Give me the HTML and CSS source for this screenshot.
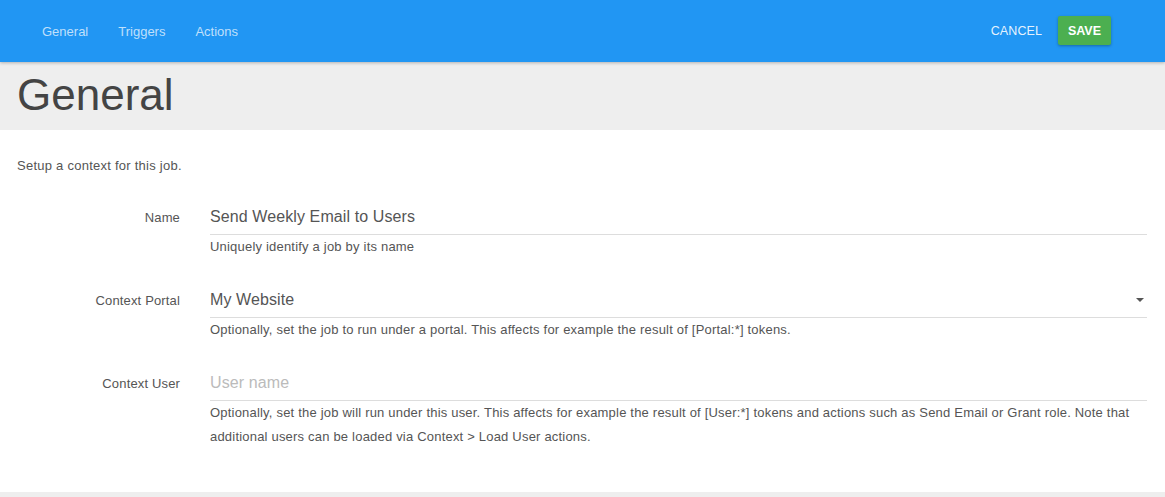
FILE: index.html
```html
<!DOCTYPE html>
<html>
<head>
<meta charset="utf-8">
<link rel="stylesheet" href="styles.css">
</head>
<body>
<header class="topbar">
  <nav class="tabs">
    <a class="tab">General</a>
    <a class="tab">Triggers</a>
    <a class="tab">Actions</a>
  </nav>
  <div class="actions">
    <button class="btn-cancel">CANCEL</button>
    <button class="btn-save">SAVE</button>
  </div>
</header>
<section class="title-band">
  <h1 class="title">General</h1>
</section>
<main class="content">
  <p class="intro">Setup a context for this job.</p>
  <div class="form-row">
    <label class="label">Name</label>
    <div class="field">
      <div class="input">Send Weekly Email to Users</div>
      <div class="help">Uniquely identify a job by its name</div>
    </div>
  </div>
  <div class="form-row">
    <label class="label">Context Portal</label>
    <div class="field">
      <div class="input select">My Website<span class="caret"></span></div>
      <div class="help">Optionally, set the job to run under a portal. This affects for example the result of [Portal:*] tokens.</div>
    </div>
  </div>
  <div class="form-row">
    <label class="label">Context User</label>
    <div class="field">
      <div class="input placeholder">User name</div>
      <div class="help">Optionally, set the job will run under this user. This affects for example the result of [User:*] tokens and actions such as Send Email or Grant role. Note that additional users can be loaded via Context &gt; Load User actions.</div>
    </div>
  </div>
</main>
<footer class="footer-band"></footer>
</body>
</html>
```

FILE: styles.css
```css
* { box-sizing: border-box; }
html, body { margin: 0; padding: 0; }
body {
  font-family: "Liberation Sans", Arial, sans-serif;
  color: #555;
  background: #fff;
  width: 1165px;
  height: 497px;
  overflow: hidden;
  display: flex;
  flex-direction: column;
}
.topbar {
  height: 62px;
  background: #2196f3;
  display: flex;
  align-items: center;
  justify-content: space-between;
  padding: 0 54px 0 27px;
  box-shadow: 0 1px 3px rgba(0,0,0,0.25);
  position: relative;
  z-index: 2;
}
.tabs { display: flex; padding-top: 2px; }
.tab {
  font-size: 13px;
  color: rgba(255,255,255,0.72);
  padding: 0 15px;
  line-height: 20px;
}
.tab + .tab { margin-left: 0; }
.actions { display: flex; align-items: center; gap: 16px; }
.btn-cancel {
  background: none;
  border: none;
  font-family: inherit;
  font-size: 12.5px;
  color: rgba(255,255,255,0.9);
  padding: 0;
  letter-spacing: 0.1px;
}
.btn-save {
  background: #4caf50;
  border: none;
  border-radius: 2px;
  font-family: inherit;
  font-size: 12.5px;
  font-weight: bold;
  color: #fff;
  width: 53px;
  height: 29px;
  padding: 0;
  box-shadow: 0 1px 3px rgba(0,0,0,0.3);
  margin-bottom: 1px;
}
.title-band {
  height: 68px;
  background: #eeeeee;
  padding-left: 17px;
}
.title {
  margin: 0;
  font-size: 44px;
  font-weight: normal;
  color: #444;
  line-height: 66px;
}
.content {
  flex: 1;
  padding: 24px 18px 0 17px;
}
.intro {
  margin: 0 0 23px 0;
  font-size: 13px;
  letter-spacing: 0.25px;
  line-height: 24px;
}
.form-row {
  display: grid;
  grid-template-columns: 163px 1fr;
  column-gap: 30px;
  margin-bottom: 25px;
}
.label {
  text-align: right;
  font-size: 13px;
  letter-spacing: 0.15px;
  line-height: 34px;
  color: #555;
}
.input {
  height: 34px;
  border-bottom: 1px solid #ddd;
  font-size: 16px;
  letter-spacing: 0.1px;
  line-height: 32px;
  color: #555;
  position: relative;
}
.placeholder { color: #bbb; }
.caret {
  position: absolute;
  right: 3px;
  top: 14px;
  width: 0;
  height: 0;
  border-left: 4px solid transparent;
  border-right: 4px solid transparent;
  border-top: 4px solid #555;
}
.help {
  font-size: 13px;
  letter-spacing: 0.2px;
  line-height: 24px;
  color: #555;
}
.footer-band {
  height: 5px;
  background: #eeeeee;
}
```
